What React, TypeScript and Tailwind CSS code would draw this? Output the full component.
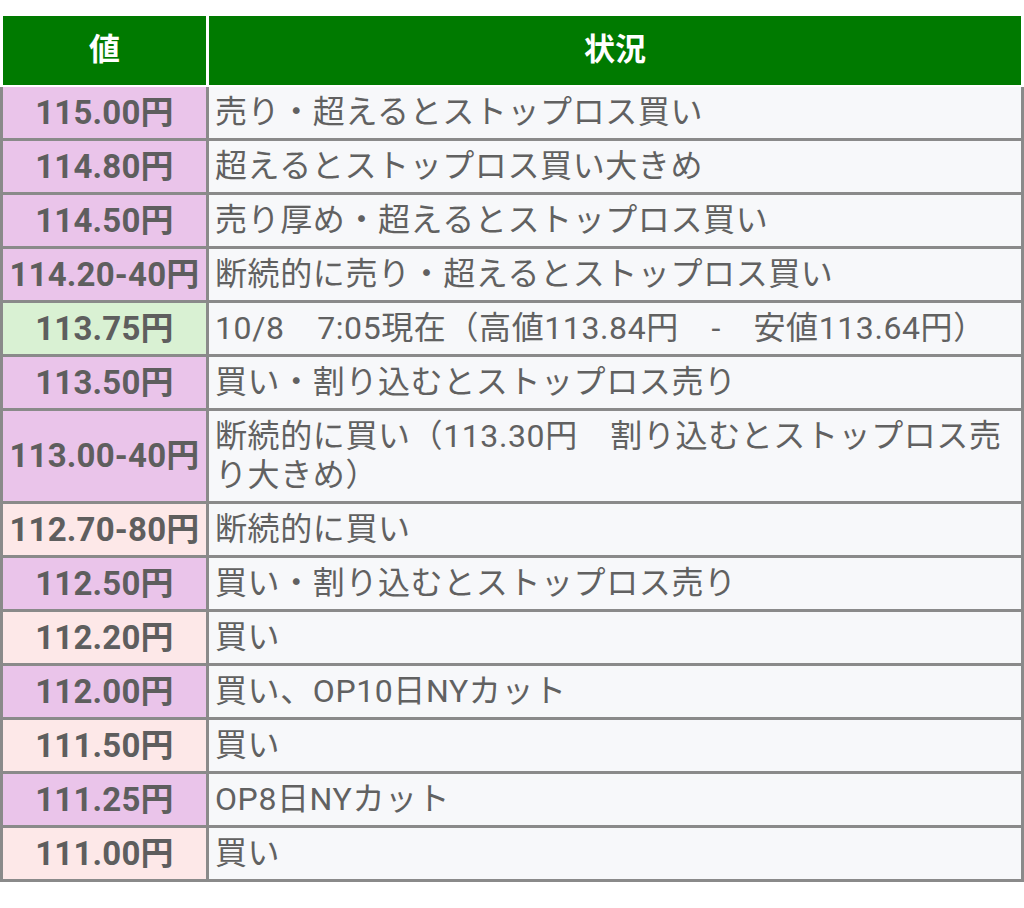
import React from "react";

type Row = { price: string; text: string; bg: string };

const P = "bg-[#eac4ea]";
const G = "bg-[#d9f1d3]";
const K = "bg-[#fde8e8]";

const rows: Row[] = [
  { price: "115.00円", text: "売り・超えるとストップロス買い", bg: P },
  { price: "114.80円", text: "超えるとストップロス買い大きめ", bg: P },
  { price: "114.50円", text: "売り厚め・超えるとストップロス買い", bg: P },
  { price: "114.20-40円", text: "断続的に売り・超えるとストップロス買い", bg: P },
  { price: "113.75円", text: "10/8\u30007:05現在（高値113.84円\u3000-\u3000安値113.64円）", bg: G },
  { price: "113.50円", text: "買い・割り込むとストップロス売り", bg: P },
  { price: "113.00-40円", text: "断続的に買い（113.30円\u3000割り込むとストップロス売り大きめ）", bg: P },
  { price: "112.70-80円", text: "断続的に買い", bg: K },
  { price: "112.50円", text: "買い・割り込むとストップロス売り", bg: P },
  { price: "112.20円", text: "買い", bg: K },
  { price: "112.00円", text: "買い、OP10日NYカット", bg: P },
  { price: "111.50円", text: "買い", bg: K },
  { price: "111.25円", text: "OP8日NYカット", bg: P },
  { price: "111.00円", text: "買い", bg: K },
];

export default function App() {
  return (
    <div
      className="w-[1024px] h-[908px] bg-white pt-[16px]"
      style={{ fontFamily: "Roboto, 'Noto Sans CJK JP', sans-serif" }}
    >
      <div className="flex h-[69px] gap-[3px] pl-[3px] pr-[3px]">
        <div className="w-[203px] bg-[#007a00] flex items-center justify-center text-white font-bold text-[31px]">
          値
        </div>
        <div className="flex-1 bg-[#007a00] flex items-center justify-center text-white font-bold text-[31px]">
          状況
        </div>
      </div>
      <div className="mt-[2px] border-l-[3px] border-r-[3px] border-[#8a8a8a]">
        {rows.map((r, i) => (
          <div key={i} className="flex border-b-[3px] border-[#8a8a8a]">
            <div
              className={`w-[206px] shrink-0 border-r-[3px] border-[#8a8a8a] ${r.bg} flex items-center justify-center font-bold text-[33px] text-[#5e5e5e] tracking-[0.2px] whitespace-nowrap`}
            >
              {r.price}
            </div>
            <div className="flex-1 bg-[#f7f8fa] pl-[6px] pr-[8px] py-[6px] leading-[39px] text-[32px] tracking-[0.6px] text-[#616161]">
              {r.text}
            </div>
          </div>
        ))}
      </div>
    </div>
  );
}
